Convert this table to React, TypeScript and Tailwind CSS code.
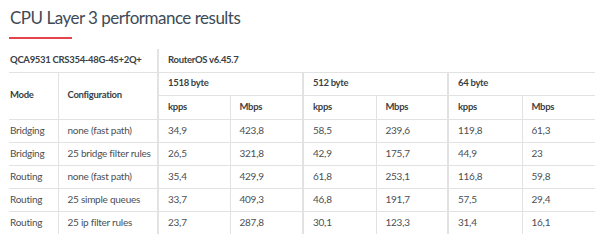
import React from 'react';

const rows = [
  ['Bridging', 'none (fast path)', '34,9', '423,8', '58,5', '239,6', '119,8', '61,3'],
  ['Bridging', '25 bridge filter rules', '26,5', '321,8', '42,9', '175,7', '44,9', '23'],
  ['Routing', 'none (fast path)', '35,4', '429,9', '61,8', '253,1', '116,8', '59,8'],
  ['Routing', '25 simple queues', '33,7', '409,3', '46,8', '191,7', '57,5', '29,4'],
  ['Routing', '25 ip filter rules', '23,7', '287,8', '30,1', '123,3', '31,4', '16,1'],
];

// thick divider after the column at these indexes
const thick = [1, 3, 5];

export default function App() {
  return (
    <div className="w-[600px] h-[244px] bg-white overflow-hidden font-['Lato',sans-serif] text-[#4b4f54]">
      <div className="pl-[10px] pt-[7px]">
        <h1 className="text-[17px] leading-[22px] text-[#3e4a56] tracking-[-0.5px]">CPU Layer 3 performance results</h1>
        <div className="mt-[8px] w-[63px] h-[2px] bg-[#e5434b] -ml-[1px]" />
      </div>

      <table className="ml-[9px] mt-[10px] border-collapse table-fixed w-[586px] text-[10px] tracking-[-0.25px] whitespace-nowrap">
        <colgroup>
          <col className="w-[49px]" />
          <col className="w-[100px]" />
          <col className="w-[72px]" />
          <col className="w-[73px]" />
          <col className="w-[73px]" />
          <col className="w-[72px]" />
          <col className="w-[74px]" />
          <col className="w-[73px]" />
        </colgroup>
        <thead className="font-bold text-[#3a3f45] text-[9.5px] tracking-[-0.3px]">
          <tr className="h-[23px] border-b border-[#e2e2e2]">
            <th colSpan={2} className="text-left font-bold pl-[1px] border-r-2 border-[#e2e2e2]">
              QCA9531 CRS354-48G-4S+2Q+
            </th>
            <th colSpan={6} className="text-left font-bold pl-[9px]">
              RouterOS v6.45.7
            </th>
          </tr>
          <tr className="h-[23px] border-b border-[#e2e2e2]">
            <th rowSpan={2} className="text-left font-bold pl-[1px] border-r border-[#e2e2e2]">Mode</th>
            <th rowSpan={2} className="text-left font-bold pl-[9px] border-r-2 border-[#e2e2e2]">Configuration</th>
            <th colSpan={2} className="text-left font-bold pl-[9px] border-r-2 border-[#e2e2e2]">1518 byte</th>
            <th colSpan={2} className="text-left font-bold pl-[9px] border-r-2 border-[#e2e2e2]">512 byte</th>
            <th colSpan={2} className="text-left font-bold pl-[9px]">64 byte</th>
          </tr>
          <tr className="h-[24px] border-b border-[#e2e2e2]">
            <th className="text-left font-bold pl-[9px] border-r border-[#e2e2e2]">kpps</th>
            <th className="text-left font-bold pl-[9px] border-r-2 border-[#e2e2e2]">Mbps</th>
            <th className="text-left font-bold pl-[9px] border-r border-[#e2e2e2]">kpps</th>
            <th className="text-left font-bold pl-[9px] border-r-2 border-[#e2e2e2]">Mbps</th>
            <th className="text-left font-bold pl-[9px] border-r border-[#e2e2e2]">kpps</th>
            <th className="text-left font-bold pl-[9px]">Mbps</th>
          </tr>
        </thead>
        <tbody>
          {rows.map((r, i) => (
            <tr
              key={i}
              className={`h-[23px] ${i < rows.length - 1 ? 'border-b border-[#e2e2e2]' : ''}`}
            >
              {r.map((c, j) => (
                <td
                  key={j}
                  className={`${j === 0 ? 'pl-[1px]' : 'pl-[9px]'} ${
                    j === 7 ? '' : thick.includes(j) ? 'border-r-2 border-[#e2e2e2]' : 'border-r border-[#e2e2e2]'
                  }`}
                >
                  {c}
                </td>
              ))}
            </tr>
          ))}
        </tbody>
      </table>
    </div>
  );
}
